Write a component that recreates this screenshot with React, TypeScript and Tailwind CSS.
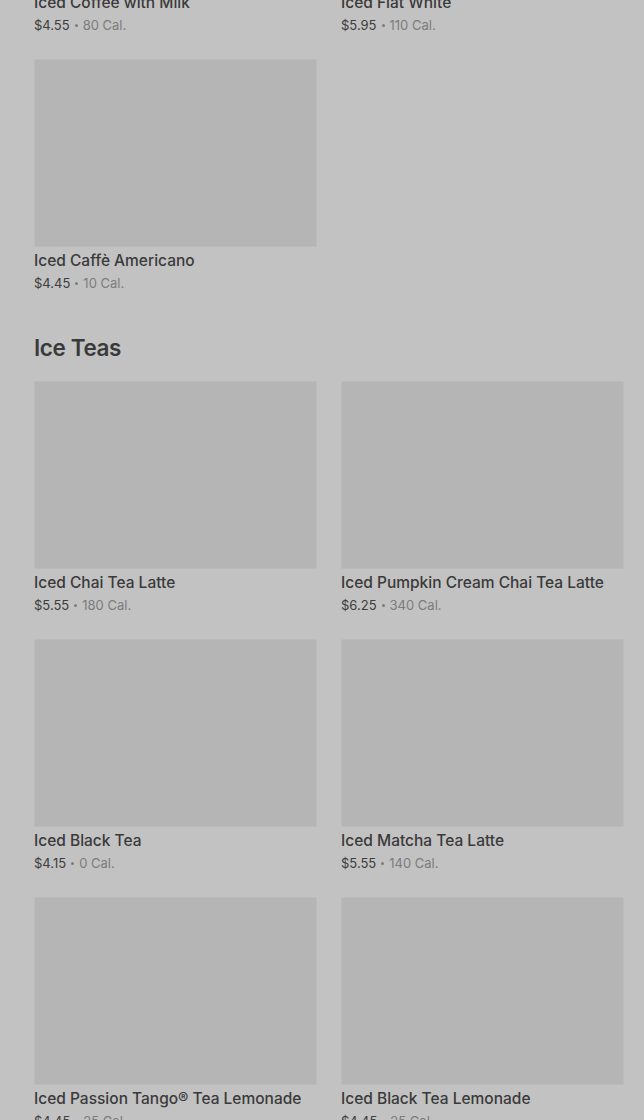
interface Drink {
  name: string;
  price: string;
  cal: string;
}

const coffees: Drink[] = [
  { name: "Iced Coffee with Milk", price: "$4.55", cal: "80 Cal." },
  { name: "Iced Flat White", price: "$5.95", cal: "110 Cal." },
  { name: "Iced Caffè Americano", price: "$4.45", cal: "10 Cal." },
];

const teas: Drink[] = [
  { name: "Iced Chai Tea Latte", price: "$5.55", cal: "180 Cal." },
  { name: "Iced Pumpkin Cream Chai Tea Latte", price: "$6.25", cal: "340 Cal." },
  { name: "Iced Black Tea", price: "$4.15", cal: "0 Cal." },
  { name: "Iced Matcha Tea Latte", price: "$5.55", cal: "140 Cal." },
  { name: "Iced Passion Tango® Tea Lemonade", price: "$4.45", cal: "25 Cal." },
  { name: "Iced Black Tea Lemonade", price: "$4.45", cal: "25 Cal." },
];

const DrinkCard = ({ drink }: { drink: Drink }) => (
  <div className="flex flex-col">
    <div className="h-[188px] w-full rounded-[2px] border border-[#bbbbbb] bg-[#b5b5b5]" />
    <div className="mt-0.5 text-[15.5px] leading-6 font-medium text-[#3a3a3a] whitespace-nowrap">
      {drink.name}
    </div>
    <div className="flex h-5 items-center gap-[5px] text-[13px] leading-5">
      <span className="text-[#3d3d3d]">{drink.price}</span>
      <span className="h-[3px] w-[3px] rounded-full bg-[#7c7c7c]" />
      <span className="text-[#7c7c7c]">{drink.cal}</span>
    </div>
  </div>
);

const App = () => {
  return (
    <div
      className="h-[1120px] w-full overflow-hidden bg-[#c2c2c2]"
      style={{ fontFamily: "Inter, 'Noto Sans', sans-serif" }}
    >
      <div className="-mt-[199px] pl-[34px] pr-[20px]">
        <div className="grid grid-cols-2 gap-x-6 gap-y-6">
          {coffees.map((d) => (
            <DrinkCard key={d.name} drink={d} />
          ))}
        </div>
        <h2 className="mt-[39px] mb-[17px] text-[22.5px] leading-8 font-semibold tracking-[-0.4px] text-[#3a3a3a]">
          Ice Teas
        </h2>
        <div className="grid grid-cols-2 gap-x-6 gap-y-6">
          {teas.map((d) => (
            <DrinkCard key={d.name} drink={d} />
          ))}
        </div>
      </div>
    </div>
  );
};

export default App;
